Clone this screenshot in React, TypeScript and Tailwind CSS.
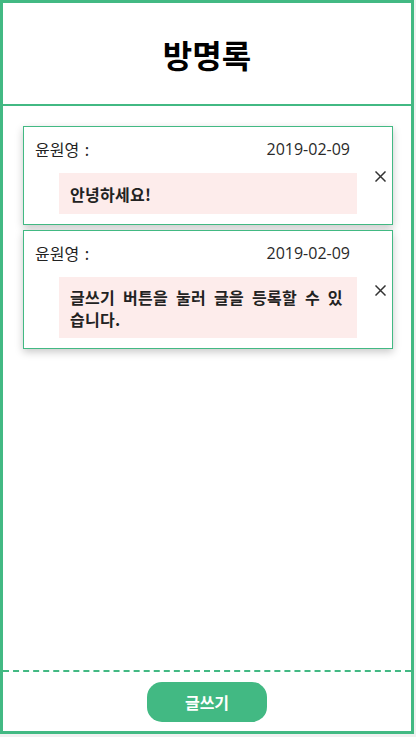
import React from "react";

const font = { fontFamily: '"Noto Sans CJK KR", "Noto Sans", sans-serif' };

type Entry = { name: string; date: string; text: string };

const entries: Entry[] = [
  { name: "윤원영 :", date: "2019-02-09", text: "안녕하세요!" },
  { name: "윤원영 :", date: "2019-02-09", text: "글쓰기 버튼을 눌러 글을 등록할 수 있습니다." },
];

function CloseIcon() {
  return (
    <svg width="11" height="11" viewBox="0 0 11 11" fill="none">
      <path d="M1 1L10 10M10 1L1 10" stroke="#333" strokeWidth="1.5" strokeLinecap="square" />
    </svg>
  );
}

function Card({ e }: { e: Entry }) {
  return (
    <div className="w-[370px] border border-[#42b983] bg-white px-[11px] pt-[10px] pb-[10px] shadow-[0_3px_8px_rgba(0,0,0,0.22)]">
      <div className="flex h-[24px] items-center justify-between pr-[31px] text-[16px] leading-[24px] text-[#222]">
        <span className="font-normal [word-spacing:2px]">{e.name}</span>
        <span className="font-normal text-[#2a2a2a]" style={{ fontFamily: '"Open Sans", "Noto Sans", sans-serif' }}>
          {e.date}
        </span>
      </div>
      <div className="relative mt-[12px]">
        <div className="mx-6 flex min-h-[41px] items-center bg-[#fdeceb] px-[11px] py-[8.5px] text-[16px] font-bold leading-[22px] tracking-[0.3px] text-[#222] [word-spacing:4px]">
          <p>{e.text}</p>
        </div>
        <button className="absolute right-[-5px] top-1/2 -mt-[23px] flex h-[12px] w-[12px] items-center justify-center">
          <CloseIcon />
        </button>
      </div>
    </div>
  );
}

export default function App() {
  return (
    <div className="min-h-screen w-full bg-[#f0f0f0]" style={font}>
      <div className="flex h-[734px] w-[414px] flex-col border-[3px] border-[#42b983] bg-white">
        <header className="flex h-[103px] shrink-0 items-center justify-center border-b-2 border-[#42b983]">
          <h1 className="mt-[1px] text-[32px] font-bold leading-[40px] text-black">방명록</h1>
        </header>
        <main className="flex flex-1 flex-col gap-[5px] pl-5 pt-5">
          {entries.map((e, i) => (
            <Card key={i} e={e} />
          ))}
        </main>
        <footer className="flex h-[61px] shrink-0 items-start justify-center border-t-2 border-dashed border-[#42b983] pt-[10px]">
          <button className="flex h-[40px] w-[120px] items-center justify-center rounded-[15px] bg-[#42b983] text-[16px] font-bold text-white">
            글쓰기
          </button>
        </footer>
      </div>
    </div>
  );
}
